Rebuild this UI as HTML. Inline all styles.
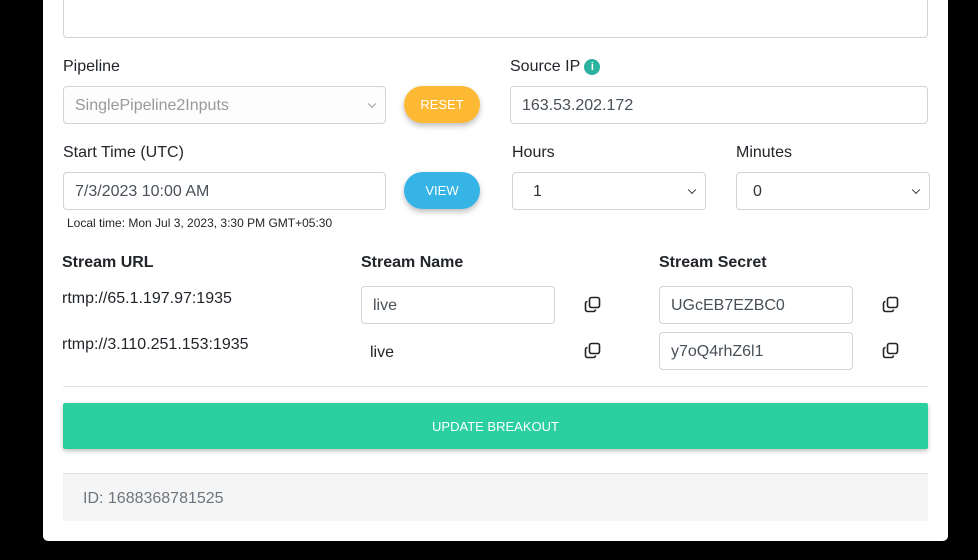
<!DOCTYPE html>
<html><head><style>
*{box-sizing:border-box;margin:0;padding:0}
body{width:978px;height:560px;background:#000;font-family:"Liberation Sans",sans-serif;position:relative;overflow:hidden;color:#212529}
.card{position:absolute;left:43px;top:-10px;width:905px;height:551px;background:#fff;border-radius:5px}
.a{position:absolute}
.in{position:absolute;border:1px solid #ced4da;border-radius:4px;background:#fff;font-size:16px;color:#495057;padding-left:11px;padding-top:2px;display:flex;align-items:center}
.lbl{position:absolute;font-size:16px;color:#212529}
.btn{position:absolute;border-radius:19px;color:#fff;font-size:13px;display:flex;align-items:center;justify-content:center;box-shadow:0 3px 6px rgba(0,0,0,.25)}
.chev{position:absolute;right:10px;top:50%;width:6px;height:6px;border-right:1.5px solid #333;border-bottom:1.5px solid #333;transform:translateY(-70%) rotate(45deg)}
.b{font-weight:bold;font-size:16px}
</style></head><body>
<div class="card"></div>
<div class="in" style="left:63px;top:-5px;width:865px;height:43px"></div>
<div class="lbl" style="left:63px;top:58px">Pipeline</div>
<div class="in" style="left:63px;top:86px;width:323px;height:38px;color:#999;background:#fdfdfd">SinglePipeline2Inputs<span class="chev" style="border-color:#999"></span></div>
<div class="btn" style="left:404px;top:86px;width:76px;height:37px;background:#fdb933">RESET</div>
<div class="lbl" style="left:510px;top:58px">Source IP <span style="display:inline-block;width:16px;height:16px;border-radius:50%;background:#2bb3a0;color:#fff;font-size:11px;font-weight:bold;text-align:center;line-height:16px;vertical-align:1px">i</span></div>
<div class="in" style="left:510px;top:86px;width:418px;height:38px">163.53.202.172</div>
<div class="lbl" style="left:63px;top:144px">Start Time (UTC)</div>
<div class="in" style="left:63px;top:172px;width:323px;height:38px">7/3/2023 10:00 AM</div>
<div class="btn" style="left:404px;top:172px;width:76px;height:37px;background:#36b4e5">VIEW</div>
<div class="a" style="left:67px;top:216px;font-size:12px">Local time: Mon Jul 3, 2023, 3:30 PM GMT+05:30</div>
<div class="lbl" style="left:512px;top:144px">Hours</div>
<div class="in" style="left:512px;top:172px;width:194px;height:38px;color:#333;padding-left:20px">1<span class="chev"></span></div>
<div class="lbl" style="left:736px;top:144px">Minutes</div>
<div class="in" style="left:736px;top:172px;width:194px;height:38px;color:#333;padding-left:16px">0<span class="chev"></span></div>
<div class="a b" style="left:62px;top:254px">Stream URL</div>
<div class="a b" style="left:361px;top:254px">Stream Name</div>
<div class="a b" style="left:659px;top:254px">Stream Secret</div>
<div class="a" style="left:62px;top:290px;font-size:16px">rtmp://65.1.197.97:1935</div>
<div class="a" style="left:62px;top:336px;font-size:16px">rtmp://3.110.251.153:1935</div>
<div class="in" style="left:361px;top:286px;width:194px;height:38px">live</div>
<div class="a" style="left:370px;top:344px;font-size:16px">live</div>
<div class="in" style="left:659px;top:286px;width:194px;height:38px">UGcEB7EZBC0</div>
<div class="in" style="left:659px;top:332px;width:194px;height:38px">y7oQ4rhZ6l1</div>
<svg class="a" style="left:584px;top:296px" width="17" height="17" viewBox="0 0 17 17" fill="none" stroke="#222" stroke-width="1.6"><rect x="5.5" y="1.5" width="10" height="10" rx="2"/><path d="M3.5 5.5h-0a2 2 0 0 0-2 2v6a2 2 0 0 0 2 2h6a2 2 0 0 0 2-2"/></svg>
<svg class="a" style="left:584px;top:342px" width="17" height="17" viewBox="0 0 17 17" fill="none" stroke="#222" stroke-width="1.6"><rect x="5.5" y="1.5" width="10" height="10" rx="2"/><path d="M3.5 5.5h-0a2 2 0 0 0-2 2v6a2 2 0 0 0 2 2h6a2 2 0 0 0 2-2"/></svg>
<svg class="a" style="left:882px;top:296px" width="17" height="17" viewBox="0 0 17 17" fill="none" stroke="#222" stroke-width="1.6"><rect x="5.5" y="1.5" width="10" height="10" rx="2"/><path d="M3.5 5.5h-0a2 2 0 0 0-2 2v6a2 2 0 0 0 2 2h6a2 2 0 0 0 2-2"/></svg>
<svg class="a" style="left:882px;top:342px" width="17" height="17" viewBox="0 0 17 17" fill="none" stroke="#222" stroke-width="1.6"><rect x="5.5" y="1.5" width="10" height="10" rx="2"/><path d="M3.5 5.5h-0a2 2 0 0 0-2 2v6a2 2 0 0 0 2 2h6a2 2 0 0 0 2-2"/></svg>
<div class="a" style="left:63px;top:386px;width:865px;height:1px;background:#e3e3e3"></div>
<div class="a" style="left:63px;top:403px;width:865px;height:46px;background:#2ccfa0;color:#fff;font-size:13px;display:flex;align-items:center;justify-content:center;box-shadow:0 2px 5px rgba(0,0,0,.25);border-radius:2px">UPDATE BREAKOUT</div>
<div class="a" style="left:63px;top:473px;width:865px;height:48px;background:#f5f5f5;border-top:1px solid #ddd;color:#6c757d;font-size:16px;padding-left:20px;padding-top:2px;display:flex;align-items:center">ID: 1688368781525</div>
</body></html>
